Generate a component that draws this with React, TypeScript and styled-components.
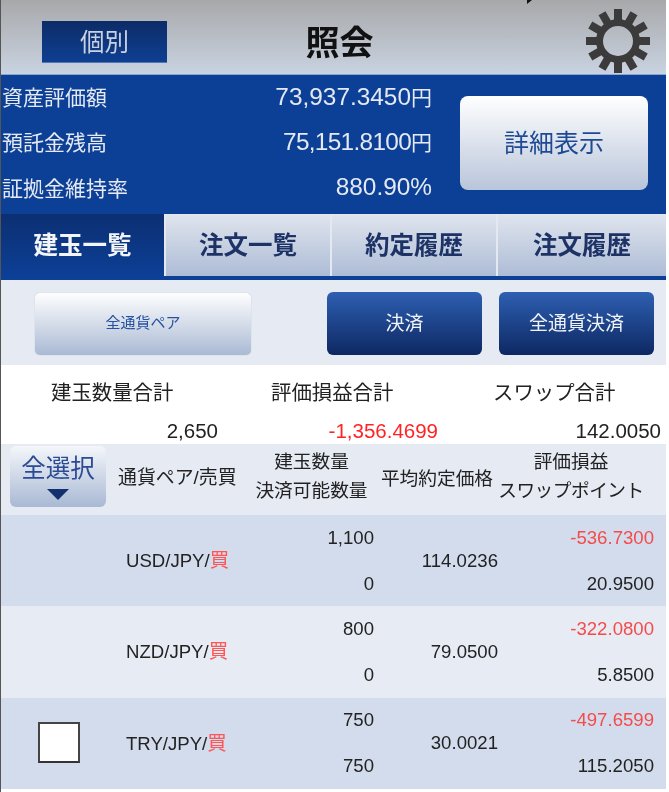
import React from "react";
import styled, { createGlobalStyle } from "styled-components";

const Global = createGlobalStyle`
  html, body { margin: 0; padding: 0; background: #fff; }
  #root { width: 669px; height: 792px; overflow: hidden; }
  * { box-sizing: border-box; }
`;

const FONT = `"Liberation Sans", "Noto Sans CJK JP", sans-serif`;

const Frame = styled.div`
  width: 666px;
  height: 792px;
  overflow: hidden;
  border-left: 1px solid #555;
  font-family: ${FONT};
  color: #222;
  filter: blur(0.35px);
`;

const Header = styled.header`
  position: relative;
  height: 75px;
  display: grid;
  grid-template-columns: 1fr 1fr 1fr;
  align-items: center;
  padding: 0 15px 0 41px;
  background: linear-gradient(#a8a8aa, #c9d3e1);
  border-bottom: 1px solid #8ba6d0;
`;

const StatusMark = styled.span`
  position: absolute;
  left: 526px;
  top: 0;
  width: 0;
  height: 0;
  border-top: 4px solid #111;
  border-right: 5px solid transparent;
`;

const ModeButton = styled.div`
  width: 125px;
  height: 42px;
  margin-top: 9px;
  padding-bottom: 2px;
  display: flex;
  align-items: center;
  justify-content: center;
  background: linear-gradient(#0d2c68, #0e3f92);
  border-bottom: 1px solid #4f76b5;
  color: #c8d2e2;
  font-size: 24.5px;
`;

const Title = styled.h1`
  margin: 11px 0 0 -14px;
  text-align: center;
  font-size: 34px;
  font-weight: 700;
  color: #111;
  line-height: 1;
`;

const GearSlot = styled.div`
  justify-self: end;
  display: flex;
  margin-top: 7px;
  filter: blur(0.5px);
`;

const Assets = styled.section`
  height: 139px;
  background: #0c3f96;
  display: flex;
`;

const AssetList = styled.div`
  width: 431px;
  padding-left: 1px;
  margin-top: -2px;
  display: flex;
  flex-direction: column;
`;

const AssetRow = styled.div`
  height: 45.5px;
  display: flex;
  justify-content: space-between;
  align-items: center;
  color: #e4e9f3;
  font-size: 21px;
`;

const Amount = styled.span<{ $spacing: number }>`
  font-size: 24.4px;
  letter-spacing: ${(p) => p.$spacing}px;
`;

const DetailButton = styled.div`
  width: 188px;
  height: 94px;
  margin: 21px 0 0 28px;
  padding-bottom: 4px;
  border-radius: 8px;
  display: flex;
  align-items: center;
  justify-content: center;
  background: linear-gradient(#fff, #b9c5da);
  color: #1e4a94;
  font-size: 25px;
`;

const Tabs = styled.nav`
  height: 66px;
  display: grid;
  grid-template-columns: 163px 166px 166px 1fr;
  background: #0c3f96;
  padding-bottom: 4px;
`;

const Tab = styled.div<{ $active?: boolean }>`
  display: flex;
  align-items: center;
  justify-content: center;
  padding-bottom: 3px;
  font-size: 24.5px;
  font-weight: 700;
  color: ${(p) => (p.$active ? "#f2f4f8" : "#1d3265")};
  background: ${(p) =>
    p.$active
      ? "linear-gradient(#0c2f72, #0c3f96)"
      : "linear-gradient(#e0e5ee, #adbcd6)"};
  border-left: ${(p) => (p.$active ? "none" : "2px solid #e4e9f1")};
`;

const Toolbar = styled.div`
  height: 85px;
  background: #e6eaf3;
  display: flex;
  align-items: flex-start;
  padding: 12px 12px 0 34px;
`;

const PairButton = styled.div`
  width: 216px;
  height: 62px;
  margin-top: 1px;
  margin-right: auto;
  padding-bottom: 6px;
  border-radius: 5px;
  display: flex;
  align-items: center;
  justify-content: center;
  background: linear-gradient(#fefefe, #aabad4);
  box-shadow: 0 0 1px #98a8c4;
  color: #2752a0;
  font-size: 15px;
`;

const ActionButton = styled.div`
  width: 155px;
  height: 63px;
  margin-left: 17px;
  padding-bottom: 4px;
  border-radius: 6px;
  display: flex;
  align-items: center;
  justify-content: center;
  background: linear-gradient(#2e5fb2, #0d2862);
  color: #f0f3f8;
  font-size: 19px;
`;

const Summary = styled.section`
  height: 79px;
  background: #fff;
  display: grid;
  grid-template-columns: 217px 220px 223px;
`;

const SummaryCell = styled.div`
  display: flex;
  flex-direction: column;
  padding-top: 15px;
`;

const SummaryLabel = styled.div<{ $pad: number }>`
  padding-left: ${(p) => p.$pad}px;
  font-size: 20.4px;
  line-height: 26px;
  white-space: nowrap;
`;

const SummaryValue = styled.div<{ $negative?: boolean }>`
  margin-top: 12px;
  text-align: right;
  font-size: 20.5px;
  line-height: 26px;
  color: ${(p) => (p.$negative ? "#ff2424" : "#222")};
`;

const COLUMNS = "110px 138px 125px 124px 1fr";

const TableHead = styled.div`
  height: 71px;
  background: #e6eaf3;
  display: grid;
  grid-template-columns: ${COLUMNS};
  align-items: center;
  font-size: 18.7px;
`;

const SelectAll = styled.div`
  width: 96px;
  height: 61px;
  margin: -7px 0 0 9px;
  border-radius: 6px;
  display: flex;
  flex-direction: column;
  align-items: center;
  background: linear-gradient(#f4f6fa, #a9b9d4);
  color: #2b4c94;
  font-size: 24.5px;
  line-height: 28px;
  padding-top: 9px;
`;

const Triangle = styled.span`
  width: 0;
  height: 0;
  margin-top: 6px;
  border-left: 11px solid transparent;
  border-right: 11px solid transparent;
  border-top: 11px solid #13306f;
`;

const HeadPair = styled.div`
  padding-left: 7px;
  margin-top: -8px;
  white-space: nowrap;
  font-size: 18.9px;
`;

const HeadStack = styled.div<{ $pad?: number }>`
  display: flex;
  flex-direction: column;
  align-items: center;
  gap: 6px;
  line-height: 23px;
  margin-top: -7px;
  white-space: nowrap;
  padding-right: ${(p) => p.$pad ?? 0}px;
`;

const TightLabel = styled.span`
  letter-spacing: -0.5px;
`;

const HeadPrice = styled.div`
  text-align: center;
  margin-top: -7px;
  padding-left: 2px;
  white-space: nowrap;
`;

const Row = styled.div<{ $tone: "dark" | "light" }>`
  height: 91.3px;
  display: grid;
  grid-template-columns: ${COLUMNS};
  align-items: center;
  font-size: 18.6px;
  background: ${(p) => (p.$tone === "dark" ? "#d3dcec" : "#e7ebf4")};
`;

const CheckCell = styled.div`
  display: flex;
  justify-content: flex-start;
  padding-left: 37px;
  margin-top: -1px;
`;

const Check = styled.div`
  width: 42px;
  height: 41px;
  background: #fff;
  border: 2px solid #444;
  border-bottom-color: #333;
`;

const Pair = styled.div`
  padding-left: 15px;
  margin-top: -4px;
  white-space: nowrap;
`;

const Side = styled.span`
  color: #f55;
  font-size: 19.5px;
`;

const NumStack = styled.div`
  display: flex;
  flex-direction: column;
  gap: 20px;
  text-align: right;
  line-height: 26px;
`;

const PnlStack = styled(NumStack)`
  padding-right: 12px;
`;

const Loss = styled.div`
  color: #f44b4b;
`;

const Price = styled.div`
  text-align: right;
`;

const Gear = () => (
  <svg width="66" height="64" viewBox="-33 -32 66 64" fill="#3b3b3b" aria-hidden="true">
    <path
      fillRule="evenodd"
      d="M0-22A22 22 0 1 1 0 22A22 22 0 1 1 0-22ZM0-15A15 15 0 1 0 0 15A15 15 0 1 0 0-15Z"
    />
    {Array.from({ length: 12 }, (_, i) => (
      <rect key={i} x="-4" y="-32" width="8" height="13" transform={`rotate(${i * 30})`} />
    ))}
  </svg>
);

const assets = [
  { label: "資産評価額", value: "73,937.3450", unit: "円", spacing: 0 },
  { label: "預託金残高", value: "75,151.8100", unit: "円", spacing: -0.7 },
  { label: "証拠金維持率", value: "880.90%", unit: "", spacing: 0 },
];

const rows = [
  { tone: "dark", pair: "USD/JPY/", qty: "1,100", avail: "0", price: "114.0236", pnl: "-536.7300", swap: "20.9500" },
  { tone: "light", pair: "NZD/JPY/", qty: "800", avail: "0", price: "79.0500", pnl: "-322.0800", swap: "5.8500" },
  { tone: "dark", pair: "TRY/JPY/", qty: "750", avail: "750", price: "30.0021", pnl: "-497.6599", swap: "115.2050", check: true },
] as const;

export default function App() {
  return (
    <Frame>
      <Global />
      <Header>
        <StatusMark />
        <ModeButton>個別</ModeButton>
        <Title>照会</Title>
        <GearSlot>
          <Gear />
        </GearSlot>
      </Header>
      <Assets>
        <AssetList>
          {assets.map((a) => (
            <AssetRow key={a.label}>
              <span>{a.label}</span>
              <span>
                <Amount $spacing={a.spacing}>{a.value}</Amount>
                {a.unit}
              </span>
            </AssetRow>
          ))}
        </AssetList>
        <DetailButton>詳細表示</DetailButton>
      </Assets>
      <Tabs>
        <Tab $active>建玉一覧</Tab>
        <Tab>注文一覧</Tab>
        <Tab>約定履歴</Tab>
        <Tab>注文履歴</Tab>
      </Tabs>
      <Toolbar>
        <PairButton>全通貨ペア</PairButton>
        <ActionButton>決済</ActionButton>
        <ActionButton>全通貨決済</ActionButton>
      </Toolbar>
      <Summary>
        <SummaryCell>
          <SummaryLabel $pad={50}>建玉数量合計</SummaryLabel>
          <SummaryValue>2,650</SummaryValue>
        </SummaryCell>
        <SummaryCell>
          <SummaryLabel $pad={53}>評価損益合計</SummaryLabel>
          <SummaryValue $negative>-1,356.4699</SummaryValue>
        </SummaryCell>
        <SummaryCell>
          <SummaryLabel $pad={55}>スワップ合計</SummaryLabel>
          <SummaryValue>142.0050</SummaryValue>
        </SummaryCell>
      </Summary>
      <TableHead>
        <SelectAll>
          全選択
          <Triangle />
        </SelectAll>
        <HeadPair>通貨ペア/売買</HeadPair>
        <HeadStack>
          <span>建玉数量</span>
          <span>決済可能数量</span>
        </HeadStack>
        <HeadPrice>平均約定価格</HeadPrice>
        <HeadStack $pad={22}>
          <span>評価損益</span>
          <TightLabel>スワップポイント</TightLabel>
        </HeadStack>
      </TableHead>
      {rows.map((r) => (
        <Row key={r.pair} $tone={r.tone}>
          <CheckCell>{"check" in r && r.check ? <Check /> : null}</CheckCell>
          <Pair>
            {r.pair}
            <Side>買</Side>
          </Pair>
          <NumStack>
            <div>{r.qty}</div>
            <div>{r.avail}</div>
          </NumStack>
          <Price>{r.price}</Price>
          <PnlStack>
            <Loss>{r.pnl}</Loss>
            <div>{r.swap}</div>
          </PnlStack>
        </Row>
      ))}
    </Frame>
  );
}
